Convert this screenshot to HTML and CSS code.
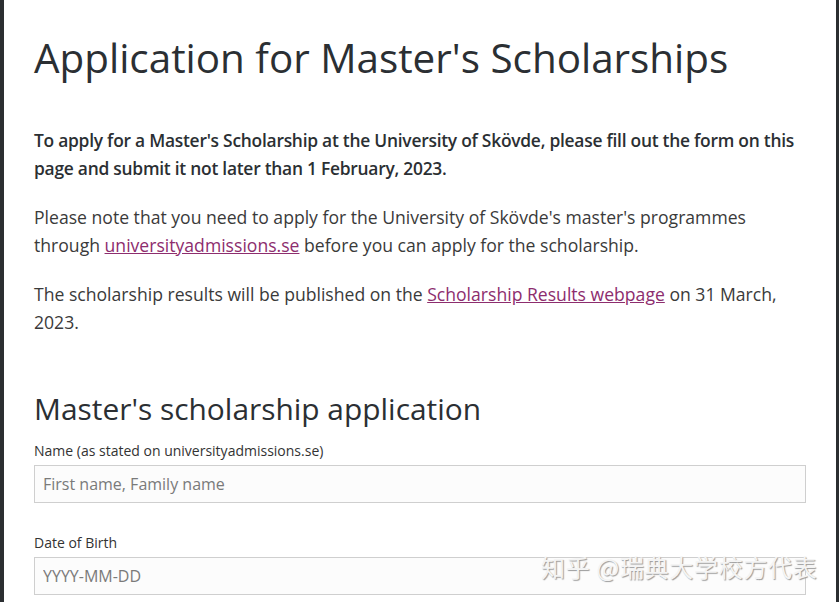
FILE: index.html
```html
<!DOCTYPE html>
<html lang="en">
<head>
<meta charset="utf-8">
<title>Application for Master's Scholarships</title>
<link rel="stylesheet" href="styles.css">
</head>
<body>
<div class="frame">
  <div class="edge edge-left"></div>
  <main class="content">
    <h1 class="title">Application for Master's Scholarships</h1>
    <p class="lead">To apply for a Master's Scholarship at the University of Skövde, please fill out the form on this page and submit it not later than 1 February, 2023.</p>
    <p class="text">Please note that you need to apply for the University of Skövde's master's programmes through <a href="#" class="link">universityadmissions.se</a> before you can apply for the scholarship.</p>
    <p class="text">The scholarship results will be published on the <a href="#" class="link">Scholarship Results webpage</a> on 31 March, 2023.</p>
    <h2 class="subtitle">Master's scholarship application</h2>
    <form class="form">
      <div class="field">
        <label class="label" for="name">Name (as stated on universityadmissions.se)</label>
        <input class="input" id="name" type="text" placeholder="First name, Family name">
      </div>
      <div class="field">
        <label class="label" for="dob">Date of Birth</label>
        <input class="input" id="dob" type="text" placeholder="YYYY-MM-DD">
      </div>
    </form>
  </main>
  <div class="edge edge-right"></div>
</div>
<div class="watermark">知乎 @瑞典大学校方代表</div>
</body>
</html>
```
FILE: styles.css
```css
html, body {
  margin: 0;
  padding: 0;
  background: #fff;
}
body {
  font-family: "Open Sans", "Noto Sans", sans-serif;
  color: #333;
  overflow: hidden;
  height: 602px;
}
.frame {
  display: flex;
  height: 602px;
}
.edge {
  background: #2b2e31;
  flex: none;
}
.edge-left { width: 4px; }
.edge-right { width: 3px; }
.content {
  flex: 1;
  padding: 30px 30px 0 30px;
}
.title {
  font-size: 40.4px;
  font-weight: 400;
  line-height: 56px;
  margin: 0 0 40px 0;
  color: #2b2f33;
}
.lead {
  font-size: 17.4px;
  font-weight: 600;
  line-height: 28px;
  letter-spacing: -0.25px;
  margin: 0 0 21px 0;
  color: #2b2f33;
}
.text {
  font-size: 17.6px;
  line-height: 28px;
  margin: 0 0 21px 0;
  color: #3a3a3a;
}
.link {
  color: #8d2d6e;
}
.subtitle {
  font-size: 29.9px;
  font-weight: 400;
  line-height: 40px;
  margin: 53px 0 12px 0;
  color: #2b2f33;
}
.form {
  display: flex;
  flex-direction: column;
  gap: 30px;
}
.field {
  display: flex;
  flex-direction: column;
  gap: 4px;
}
.label {
  font-size: 14px;
  line-height: 20px;
  color: #333;
}
.input {
  box-sizing: border-box;
  height: 38px;
  width: 772px;
  border: 1px solid #cfcfcf;
  background: #fcfcfc;
  font-family: inherit;
  font-size: 16px;
  padding: 0 8px;
  color: #333;
}
.input::placeholder {
  color: #7a7a7a;
}
.watermark {
  position: absolute;
  left: 541px;
  top: 549px;
  font-family: "Noto Sans CJK SC", sans-serif;
  font-size: 24px;
  color: #f4f4f4;
  text-shadow: 1px 1px 1px #9a9a9a;
  letter-spacing: 0.7px;
}
```
